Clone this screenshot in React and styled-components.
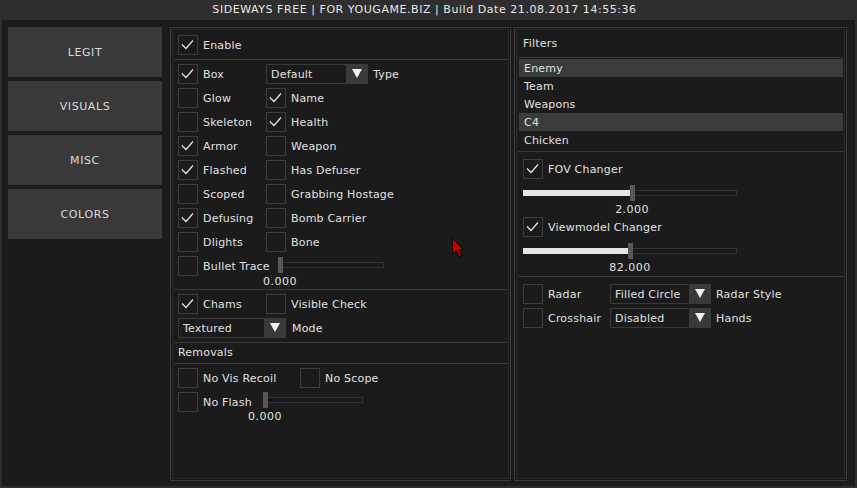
import React from 'react';
import styled, { createGlobalStyle } from 'styled-components';

const GlobalStyle = createGlobalStyle`
  html, body {
    margin: 0;
    padding: 0;
    background: #1b1b1b;
  }
  body {
    font-family: "DejaVu Sans", Verdana, sans-serif;
    font-size: 11px;
    letter-spacing: 0.2px;
    color: #e0e0e0;
  }
  * { box-sizing: border-box; }
`;

const Window = styled.div`
  position: relative;
  width: 857px;
  height: 488px;
  display: flex;
  flex-direction: column;
  background: #1b1b1b;
`;

const TitleBar = styled.div`
  height: 20px;
  line-height: 20px;
  text-align: center;
  letter-spacing: 0.55px;
  padding-right: 8px;
  background: #2e2e2e;
  color: #e6e6e6;
`;

const Body = styled.div`
  flex: 1;
  min-height: 0;
  display: flex;
  gap: 8px;
  border: 2px solid #2e2e2e;
  border-top: none;
  padding: 7px 8px 5px 6px;
`;

const Nav = styled.nav`
  width: 154px;
  flex-shrink: 0;
  display: flex;
  flex-direction: column;
  gap: 4px;
`;

const NavButton = styled.div`
  height: 50px;
  display: flex;
  align-items: center;
  justify-content: center;
  letter-spacing: 0.6px;
  background: #393939;
  color: #dadada;
`;

const Content = styled.div`
  flex: 1;
  display: grid;
  grid-template-columns: 341px 1fr;
  gap: 3px;
`;

const Panel = styled.div`
  border: 1px solid #3a3a3a;
  box-shadow: inset 0 0 0 1px #161616, inset 0 0 0 2px #2b2b2b;
  padding: 3px;
  display: flex;
  flex-direction: column;
`;

const Section = styled.div`
  display: flex;
  flex-direction: column;
  gap: ${p => p.$gap ?? 4}px;
  padding: ${p => p.$pad || '4px'};
  & + & {
    border-top: 1px solid #383838;
  }
`;

const Heading = styled.div`
  line-height: 14px;
`;

const Row = styled.div`
  display: flex;
  align-items: flex-start;
  min-height: 20px;
`;

const Item = styled.div`
  display: flex;
  align-items: center;
  gap: ${p => p.$gap ?? 5}px;
  width: ${p => (p.$w ? `${p.$w}px` : 'auto')};
  height: 20px;
  flex-shrink: 0;
  white-space: nowrap;
`;

const Box = styled.div`
  width: 20px;
  height: 20px;
  flex-shrink: 0;
  border: 1px solid #3c3c3c;
  background: #1b1b1b;
  display: flex;
  align-items: center;
  justify-content: center;
`;

const Select = styled.div`
  display: flex;
  width: ${p => p.$w}px;
  height: 20px;
  border: 1px solid #383838;
  background: #1b1b1b;
`;

const SelectValue = styled.div`
  flex: 1;
  padding-left: 4px;
  line-height: 19px;
  white-space: nowrap;
`;

const SelectArrow = styled.div`
  width: 22px;
  margin: -1px -1px -1px 0;
  padding-bottom: 2px;
  background: #3a3a3a;
  display: flex;
  align-items: center;
  justify-content: center;
  &::after {
    content: '';
    border-left: 5px solid transparent;
    border-right: 5px solid transparent;
    border-top: 9px solid #f2f2f2;
  }
`;

const SliderCol = styled.div`
  display: flex;
  flex-direction: column;
  width: ${p => p.$w}px;
  padding-top: ${p => p.$top}px;
  flex-shrink: 0;
`;

const Track = styled.div`
  position: relative;
  height: 6px;
  background: #181818;
  box-shadow: inset 0 0 0 1px #333;
`;

const Fill = styled.div`
  height: 100%;
  min-width: 2px;
  background: #e6e6e6;
`;

const Handle = styled.div`
  position: absolute;
  top: -5px;
  width: 5px;
  height: 16px;
  margin-left: -2px;
  background: #575757;
`;

const ValueLine = styled.div`
  display: flex;
  margin-top: 7px;
  height: 12px;
  line-height: 13px;
`;

const Spacer = styled.div`
  flex-shrink: 0;
`;

const Value = styled.span`
  white-space: nowrap;
  letter-spacing: 0.5px;
  transform: translateX(-50%);
`;

const List = styled.div`
  display: flex;
  flex-direction: column;
  padding: 1px 0 2px;
`;

const ListItem = styled.div`
  height: 18px;
  line-height: 20px;
  padding-left: 5px;
  margin-left: 1px;
  background: ${p => (p.$active ? '#3b3b3b' : 'transparent')};
`;

const Cursor = styled.svg`
  position: absolute;
  left: 452px;
  top: 238px;
`;

const Check = ({ on }) => (
  <Box>
    {on && (
      <svg width="18" height="18" viewBox="0 0 18 18">
        <polyline points="3,8.5 7,12.5 14,4.5" fill="none" stroke="#e4e4e4" strokeWidth="1.3" />
      </svg>
    )}
  </Box>
);

const CheckItem = ({ on, label, w }) => (
  <Item $w={w}>
    <Check on={on} />
    {label}
  </Item>
);

const Dropdown = ({ value, w, label, gap = 5 }) => (
  <Item $gap={gap}>
    <Select $w={w}>
      <SelectValue>{value}</SelectValue>
      <SelectArrow />
    </Select>
    {label}
  </Item>
);

const Slider = ({ w, top, pct, value }) => (
  <SliderCol $w={w} $top={top}>
    <Track>
      <Fill style={{ width: `${pct}%` }} />
      <Handle style={{ left: `${pct}%` }} />
    </Track>
    <ValueLine>
      <Spacer style={{ width: `${pct}%` }} />
      <Value>{value}</Value>
    </ValueLine>
  </SliderCol>
);

const espRows = [
  [['Box', true], null],
  [['Glow', false], ['Name', true]],
  [['Skeleton', false], ['Health', true]],
  [['Armor', true], ['Weapon', false]],
  [['Flashed', true], ['Has Defuser', false]],
  [['Scoped', false], ['Grabbing Hostage', false]],
  [['Defusing', true], ['Bomb Carrier', false]],
  [['Dlights', false], ['Bone', false]],
];

const filters = [
  ['Enemy', true],
  ['Team', false],
  ['Weapons', false],
  ['C4', true],
  ['Chicken', false],
];

export default function App() {
  return (
    <>
      <GlobalStyle />
      <Window>
        <TitleBar>SIDEWAYS FREE | FOR YOUGAME.BIZ | Build Date 21.08.2017 14:55:36</TitleBar>
        <Body>
          <Nav>
            <NavButton>LEGIT</NavButton>
            <NavButton>VISUALS</NavButton>
            <NavButton>MISC</NavButton>
            <NavButton>COLORS</NavButton>
          </Nav>
          <Content>
            <Panel>
              <Section>
                <CheckItem on label="Enable" />
              </Section>
              <Section $pad="4px 4px 2px">
                {espRows.map(([a, b]) => (
                  <Row key={a[0]}>
                    <CheckItem w={88} on={a[1]} label={a[0]} />
                    {b ? <CheckItem on={b[1]} label={b[0]} /> : <Dropdown w={102} value="Default" label="Type" />}
                  </Row>
                ))}
                <Row>
                  <CheckItem w={102} label="Bullet Trace" />
                  <Slider w={104} top={6} pct={0} value="0.000" />
                </Row>
              </Section>
              <Section>
                <Row>
                  <CheckItem w={88} on label="Chams" />
                  <CheckItem label="Visible Check" />
                </Row>
                <Dropdown w={108} gap={6} value="Textured" label="Mode" />
              </Section>
              <Section $pad="3px 4px">
                <Heading>Removals</Heading>
              </Section>
              <Section>
                <Row>
                  <CheckItem w={122} label="No Vis Recoil" />
                  <CheckItem label="No Scope" />
                </Row>
                <Row>
                  <CheckItem w={87} label="No Flash" />
                  <Slider w={98} top={5} pct={0} value="0.000" />
                </Row>
              </Section>
            </Panel>
            <Panel>
              <Section $pad="6px 5px">
                <Heading>Filters</Heading>
              </Section>
              <Section $pad="0" $gap={0}>
                <List>
                  {filters.map(([name, active]) => (
                    <ListItem key={name} $active={active}>{name}</ListItem>
                  ))}
                </List>
              </Section>
              <Section $pad="7px 5px 3px" $gap={2}>
                <CheckItem on label="FOV Changer" />
                <Slider w={214} top={9} pct={51} value="2.000" />
                <CheckItem on label="Viewmodel Changer" />
                <Slider w={214} top={9} pct={50} value="82.000" />
              </Section>
              <Section $pad="7px 5px">
                <Row>
                  <CheckItem w={87} label="Radar" />
                  <Dropdown w={101} value="Filled Circle" label="Radar Style" />
                </Row>
                <Row>
                  <CheckItem w={87} label="Crosshair" />
                  <Dropdown w={101} value="Disabled" label="Hands" />
                </Row>
              </Section>
            </Panel>
          </Content>
        </Body>
        <Cursor width="13" height="20" viewBox="0 0 13 20">
          <path d="M0.5,0.5 L0.5,16 L4,12.5 L7,19 L9.5,18 L6.5,11.5 L11.5,11.5 Z" fill="#c40000" stroke="#1a0000" strokeWidth="1" />
        </Cursor>
      </Window>
    </>
  );
}
